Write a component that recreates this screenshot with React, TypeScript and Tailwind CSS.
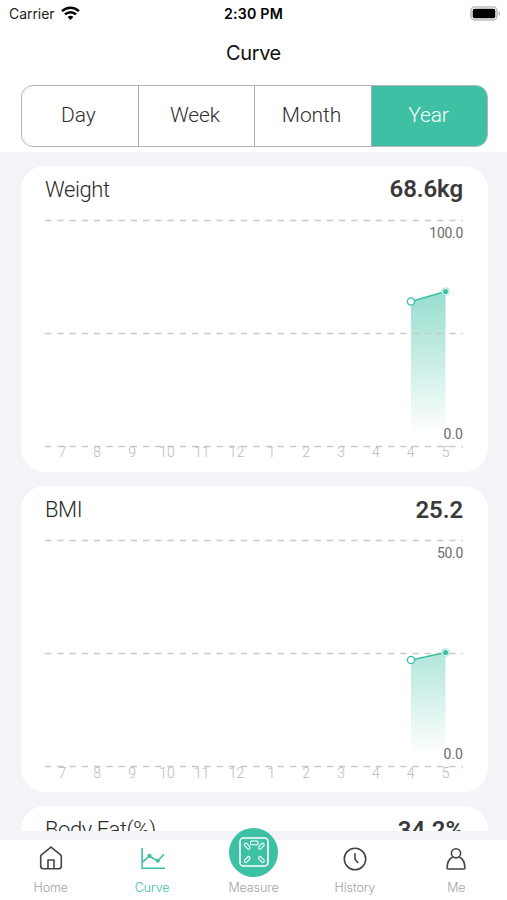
import React from "react";

const MONTHS = ["7", "8", "9", "10", "11", "12", "1", "2", "3", "4", "4", "5"];
const GREEN = "#3dc0a4";

function StatusBar() {
  return (
    <div className="grid h-[27px] grid-cols-3 items-center pl-[9px] pr-[6px] font-['Inter',sans-serif] text-black">
      <div className="flex items-center gap-[6px]">
        <span className="text-[14px] tracking-[-0.05px] text-[#222]">Carrier</span>
        <svg className="-mt-[2px]" width="19" height="14" viewBox="0 0 19 14" fill="none" stroke="#000" strokeWidth="2.5">
          <path d="M1 5.2C5.8.6 13.2.6 18 5.2" />
          <path d="M4 8.4c3.1-3 7.9-3 11 0" />
          <path d="M9.5 14l-2.9-3.1c1.6-1.5 4.2-1.5 5.8 0z" fill="#000" stroke="none" />
        </svg>
      </div>
      <span className="-ml-[3px] whitespace-nowrap text-center text-[14.2px] font-semibold tracking-[0.2px]">2:30 PM</span>
      <div className="flex justify-end">
        <svg className="-mt-px" width="31" height="15" viewBox="0 0 31 15">
          <rect x="1" y="1" width="26" height="13" rx="4" fill="#fff" stroke="#bdbdbd" strokeWidth="1.6" />
          <rect x="2.7" y="2.7" width="22.6" height="9.6" rx="2" fill="#000" />
          <path d="M28.7 5.3c1.9.5 1.9 3.9 0 4.4z" fill="#aaa" />
        </svg>
      </div>
    </div>
  );
}

function Segments() {
  return (
    <div className="ml-[20.5px] mr-[19.5px] grid h-[62px] grid-cols-[117px_116.5px_116.5px_1fr] overflow-hidden rounded-[12px] border-[1.5px] border-[#b4b4b4] text-[21px] font-light tracking-[-0.1px] text-[#303030]">
      {["Day", "Week", "Month"].map((label) => (
        <div key={label} className="flex items-center justify-center border-r border-[#adadad] pr-[2.5px]">
          {label}
        </div>
      ))}
      <div className="flex items-center justify-center bg-[#3dc0a4] pr-[1px] text-white">Year</div>
    </div>
  );
}

type CardProps = { title: string; value: string; max: string; from: number; to: number; fade: number };

function Card({ title, value, max, from, to, fade }: CardProps) {
  const id = "fade-" + title;
  return (
    <section className="h-[306px] shrink-0 rounded-[24px] bg-white pl-[24.5px] pr-[24.5px] pt-[8.5px]">
      <div className="flex h-[30px] items-center justify-between">
        <h2 className="text-[22px] font-light tracking-[-0.4px] text-[#2a2a2a]">{title}</h2>
        <span className="text-[24px] font-semibold tracking-[-0.1px] text-[#3a3a3a]">{value}</span>
      </div>
      <div className="relative mt-[10.5px]">
        <svg className="block" width="418" height="240" viewBox="0 0 418 240">
          <defs>
            <linearGradient id={id} gradientUnits="userSpaceOnUse" x1="0" y1="65" x2="0" y2="220">
              <stop offset="0" stopColor={GREEN} stopOpacity={fade} />
              <stop offset="1" stopColor={GREEN} stopOpacity="0" />
            </linearGradient>
          </defs>
          <path d={`M366 ${from}L400.5 ${to}V222H366Z`} fill={`url(#${id})`} />
          <g stroke="#c9c9cd" strokeWidth="1.5" strokeDasharray="6.3 5.95">
            <path d="M0 5.5H418M0 118.5H418M0 231.5H418" />
          </g>
          <path d={`M366 ${from}L400.5 ${to}`} stroke={GREEN} strokeWidth="1.5" />
          <circle cx="366" cy={from} r="3.6" fill="#fff" stroke={GREEN} strokeWidth="1.4" />
          <circle cx="400.5" cy={to} r="3.8" fill="#fff" stroke="#a0dfd0" strokeWidth="1" />
          <circle cx="400.5" cy={to} r="2.6" fill={GREEN} />
        </svg>
        <span className="absolute right-0 top-[8px] text-[14px] leading-[20px] tracking-[-0.3px] text-[#6c6c6c]">{max}</span>
        <span className="absolute right-0 top-[209px] text-[14px] leading-[20px] text-[#6c6c6c]">0.0</span>
        <div className="absolute inset-x-0 top-[227.5px] grid grid-cols-12 text-center text-[14px] font-light leading-[20px] text-[#b9b9c6]">
          {MONTHS.map((m, i) => (
            <span key={i}>{m}</span>
          ))}
        </div>
      </div>
    </section>
  );
}

function Tab({ label, active, children }: { label: string; active?: boolean; children: React.ReactNode }) {
  return (
    <div className={"flex flex-col items-center " + (active ? "text-[#3dc0a4]" : "text-[#444]")}>
      <div className="flex h-[38px] items-center">{children}</div>
      <span className={"font-['Inter',sans-serif] text-[12.5px] font-light leading-[20px] tracking-[-0.1px] " + (active ? "" : "text-[#a3a3a3]")}>
        {label}
      </span>
    </div>
  );
}

function TabBar() {
  const line = { width: 26, height: 26, viewBox: "0 0 26 26", fill: "none", stroke: "currentColor", strokeWidth: 1.6 };
  return (
    <nav className="grid h-[60px] shrink-0 grid-cols-5 bg-white">
      <Tab label="Home">
        <svg {...line} className="-mt-[2px] ml-px" strokeLinejoin="round">
          <path d="M13 2.1L22.6 9.8Q23.3 10.4 23.3 11.3V21Q23.3 23.8 20.5 23.8H5.5Q2.7 23.8 2.7 21V11.3Q2.7 10.4 3.4 9.8Z" />
          <path d="M10 23.8V15H16V23.8" />
        </svg>
      </Tab>
      <Tab label="Curve" active>
        <svg {...line} className="-mt-[2px] ml-px">
          <path d="M2.1 3V23.2H25M2.8 16.8L9.5 11.2L17.8 16L23.8 9.3" />
          <circle cx="9.5" cy="10.8" r="1.3" fill="currentColor" />
          <circle cx="17.8" cy="15.8" r="1.2" fill="currentColor" />
        </svg>
      </Tab>
      <Tab label="Measure">
        <div className="-mt-[50px] ml-px flex size-[49px] shrink-0 translate-y-[18px] items-center justify-center rounded-full bg-[#3dc0a4]">
          <svg width="30" height="30" viewBox="0 0 30 30" fill="none" stroke="#fff" strokeWidth="1.1">
            <rect x="1" y="1" width="28" height="28" rx="3.5" strokeWidth="1.6" />
            <rect x="11.5" y="4" width="7.5" height="3.8" rx="1" />
            <rect x="4.7" y="7.7" width="7" height="3" rx="1.5" transform="rotate(48 8.2 9.2)" />
            <rect x="18.9" y="7.7" width="7" height="3" rx="1.5" transform="rotate(-48 22.4 9.2)" />
            <rect x="4.7" y="21" width="7" height="3" rx="1.5" transform="rotate(-48 8.2 22.5)" />
            <rect x="18.9" y="21" width="7" height="3" rx="1.5" transform="rotate(48 22.4 22.5)" />
          </svg>
        </div>
      </Tab>
      <Tab label="History">
        <svg {...line} className="-mt-px">
          <circle cx="13" cy="13" r="10.7" />
          <path d="M13 7.2V13.2L16.2 17" />
        </svg>
      </Tab>
      <Tab label="Me">
        <svg {...line} className="-mt-px" strokeLinejoin="round">
          <circle cx="13" cy="7.3" r="4.6" />
          <path d="M9.8 11C6 12.7 4.1 17 4.1 22Q4.1 23 5.1 23H20.9Q21.9 23 21.9 22C21.9 17 20 12.7 16.2 11" />
        </svg>
      </Tab>
    </nav>
  );
}

export default function App() {
  return (
    <div className="flex h-[900px] w-[507px] flex-col overflow-hidden bg-[#f2f4f8] font-['Roboto',sans-serif]">
      <header className="h-[152px] shrink-0 bg-white">
        <StatusBar />
        <h1 className="h-[58px] pt-[10px] text-center font-['Inter',sans-serif] text-[20px] leading-[32px] tracking-[-0.4px] text-[#111]">Curve</h1>
        <Segments />
      </header>
      <main className="flex h-[679px] shrink-0 flex-col gap-[14.25px] overflow-hidden pl-[20.5px] pr-[19.5px] pt-[13.75px]">
        <Card title="Weight" value="68.6kg" max="100.0" from={86.5} to={76.5} fade={0.58} />
        <Card title="BMI" value="25.2" max="50.0" from={125} to={117.5} fade={0.6} />
        <Card title="Body Fat(%)" value="34.2%" max="50.0" from={87} to={77} fade={0.5} />
      </main>
      <div className="h-[9px] shrink-0" />
      <TabBar />
    </div>
  );
}
